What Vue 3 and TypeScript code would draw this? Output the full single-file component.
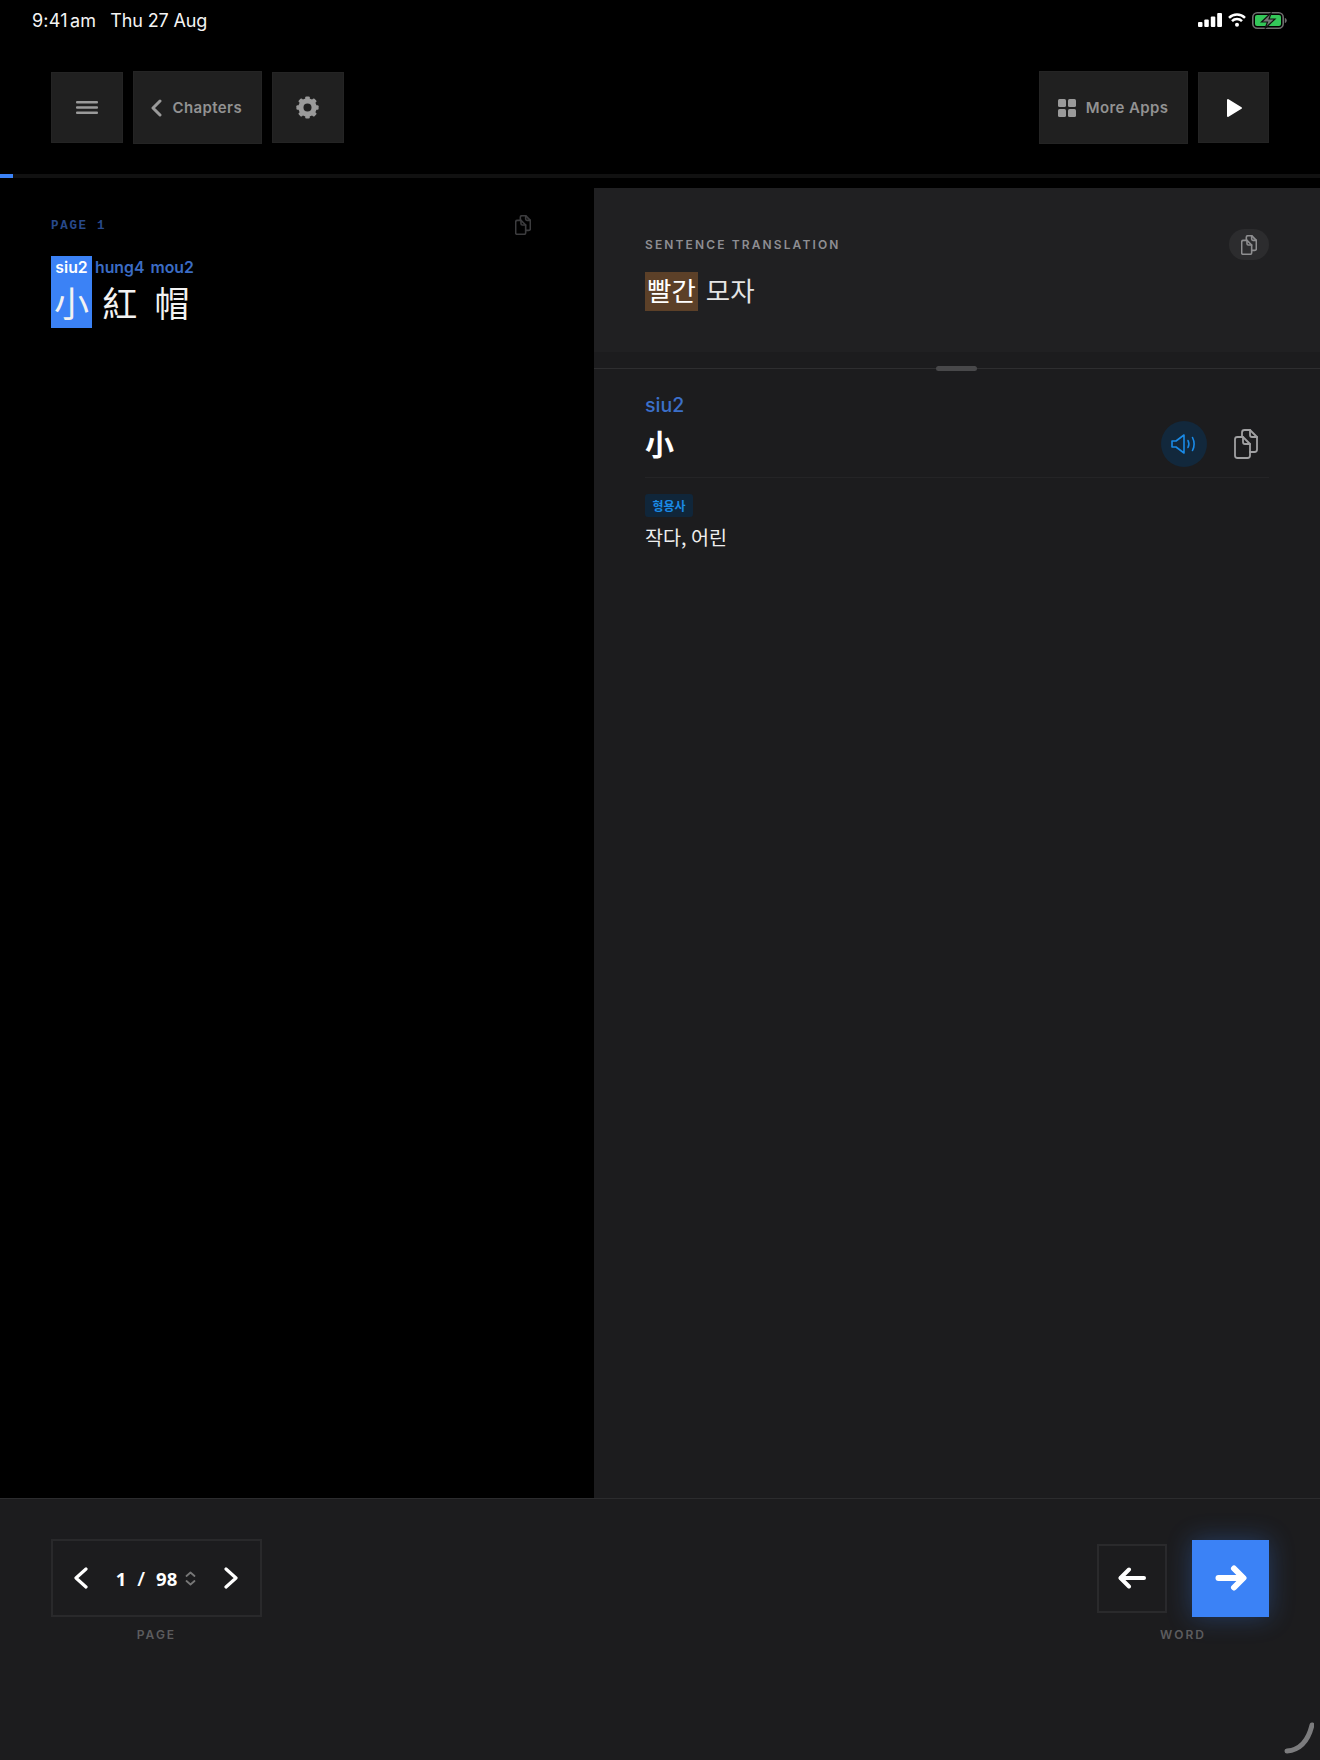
<script setup lang="ts">
interface RubyWord {
  reading: string
  text: string
  active?: boolean
}

const words: RubyWord[] = [
  { reading: 'siu2', text: '小', active: true },
  { reading: 'hung4', text: '紅' },
  { reading: 'mou2', text: '帽' },
]

const copyPaths = [
  'M8 7V3.5A2.5 2.5 0 0 1 10.5 1H16l7 7v12.5a2.5 2.5 0 0 1-2.500 2.500H16',
  'M16 1v5a2 2 0 0 0 2 2h5',
  'M3.500 8H9l7 7v11.500a2.500 2.500 0 0 1-2.500 2.500h-10A2.500 2.500 0 0 1 1 26.500v-16A2.500 2.500 0 0 1 3.500 8z',
  'M9 8v5a2 2 0 0 0 2 2h5',
]

const gearTeeth = [0, 45, 90, 135, 180, 225, 270, 315]
</script>

<template>
  <div class="app">
    <header class="status">
      <div class="status__time">
        <span class="status__clock">9:41 am</span>
        <span class="status__date">Thu 27 Aug</span>
      </div>
      <div class="status__icons">
        <svg width="24" height="14" viewBox="0 0 24 14" fill="#fff">
          <rect x="0" y="9" width="4.500" height="5" rx="1" />
          <rect x="6.300" y="6.500" width="4.500" height="7.500" rx="1" />
          <rect x="12.800" y="3.500" width="4.500" height="10.500" rx="1" />
          <rect x="19.200" y="0" width="4.800" height="14" rx="1" />
        </svg>
        <svg width="18" height="14" viewBox="0 0 18 14" fill="none" stroke="#fff" stroke-width="2.500">
          <path d="M1 4.800a11.500 11.500 0 0 1 16 0" />
          <path d="M4 8.200a7 7 0 0 1 10 0" />
          <circle cx="9" cy="11.800" r="2" fill="#fff" stroke="none" />
        </svg>
        <svg width="35" height="17" viewBox="0 0 35 17">
          <rect x="0.800" y="0.800" width="30.400" height="15.400" rx="4.500" fill="none" stroke="#6e6e6e" stroke-width="1.600" />
          <rect x="3" y="3" width="26" height="11" rx="2" fill="#34c759" />
          <path d="M32.800 6v5c1.200-.3 2-1.300 2-2.500s-.8-2.200-2-2.500z" fill="#6e6e6e" />
          <path d="M19.500 0.500 9.500 10h6l-2.500 6.500L23 7h-6z" fill="#777" stroke="#111" stroke-width="1.200" />
        </svg>
      </div>
    </header>

    <nav class="toolbar">
      <div class="toolbar__group">
        <button class="tool tool--square">
          <svg width="22" height="13" viewBox="0 0 22 13" fill="#9a9a9a">
            <rect width="22" height="2.600" rx="1" />
            <rect y="5.200" width="22" height="2.600" rx="1" />
            <rect y="10.400" width="22" height="2.600" rx="1" />
          </svg>
        </button>
        <button class="tool tool--text tool--chapters">
          <svg width="11" height="18" viewBox="0 0 11 18" fill="none" stroke="#9a9a9a" stroke-width="3" stroke-linecap="round" stroke-linejoin="round">
            <path d="M9 2 2 9l7 7" />
          </svg>
          <span>Chapters</span>
        </button>
        <button class="tool tool--square">
          <svg width="23" height="23" viewBox="0 0 24 24" fill="#9a9a9a">
            <rect
              v-for="deg in gearTeeth"
              :key="deg"
              x="9.600"
              y="0.400"
              width="4.800"
              height="5"
              rx="1.200"
              :transform="`rotate(${deg} 12 12)`"
            />
            <circle cx="12" cy="12" r="6.900" fill="none" stroke="#9a9a9a" stroke-width="5.400" />
          </svg>
        </button>
      </div>
      <div class="toolbar__group">
        <button class="tool tool--text tool--apps">
          <svg width="18" height="18" viewBox="0 0 18 18" fill="#9a9a9a">
            <rect width="8" height="8" rx="1.500" />
            <rect x="10" width="8" height="8" rx="1.500" />
            <rect y="10" width="8" height="8" rx="1.500" />
            <rect x="10" y="10" width="8" height="8" rx="1.500" />
          </svg>
          <span>More Apps</span>
        </button>
        <button class="tool tool--square">
          <svg class="tool__play" width="17" height="20" viewBox="0 0 17 20" fill="#fff" stroke="#fff" stroke-width="2" stroke-linejoin="round">
            <path d="M2 2v16l13-8z" />
          </svg>
        </button>
      </div>
    </nav>

    <div class="progress"><div class="progress__fill"></div></div>

    <main class="main">
      <section class="reader">
        <div class="reader__head">
          <span class="reader__page">PAGE 1</span>
          <svg class="copy copy--dim" width="16" height="20" viewBox="0 0 24 30" fill="none">
            <path v-for="d in copyPaths" :key="d" :d="d" />
          </svg>
        </div>
        <div class="reader__line">
          <div v-for="w in words" :key="w.reading" class="word" :class="{ 'word--active': w.active }">
            <span class="word__reading">{{ w.reading }}</span>
            <span class="word__text">{{ w.text }}</span>
          </div>
        </div>
      </section>

      <section class="panel">
        <div class="sentence">
          <div class="sentence__head">
            <span class="sentence__label">SENTENCE TRANSLATION</span>
            <span class="sentence__copy">
              <svg class="copy copy--mid" width="16" height="20" viewBox="0 0 24 30" fill="none">
                <path v-for="d in copyPaths" :key="d" :d="d" />
              </svg>
            </span>
          </div>
          <div class="sentence__text">
            <mark class="sentence__mark">빨간</mark>
            <span>모자</span>
          </div>
        </div>
        <div class="split"><span class="split__handle"></span></div>
        <div class="entry">
          <div class="entry__reading">siu2</div>
          <div class="entry__head">
            <span class="entry__word">小</span>
            <div class="entry__actions">
              <span class="entry__sound">
                <svg width="26" height="20" viewBox="0 0 26 20" fill="none" stroke="#1a8ae6" stroke-width="1.600" stroke-linecap="round" stroke-linejoin="round">
                  <path d="M1 7v6h4l8 6V1L5 7z" />
                  <path d="M17 6.500c1 2 1 5 0 7" />
                  <path d="M21.500 3.500c2 4 2 9 0 13" />
                </svg>
              </span>
              <svg class="copy copy--bright" width="24" height="30" viewBox="0 0 24 30" fill="none">
                <path v-for="d in copyPaths" :key="d" :d="d" />
              </svg>
            </div>
          </div>
          <span class="entry__tag">형용사</span>
          <p class="entry__meaning">작다, 어린</p>
        </div>
      </section>
    </main>

    <footer class="footer">
      <div class="pager">
        <div class="pager__box">
          <svg width="15" height="22" viewBox="0 0 15 22" fill="none" stroke="#fff" stroke-width="3.200" stroke-linecap="round" stroke-linejoin="round">
            <path d="M13 2 3 11l10 9" />
          </svg>
          <div class="pager__count">
            <span>1</span>
            <span class="pager__slash">/</span>
            <span>98</span>
            <svg width="11" height="15" viewBox="0 0 11 15" fill="none" stroke="#777" stroke-width="1.800" stroke-linecap="round" stroke-linejoin="round">
              <path d="M1.500 5 5.500 1.500l4 3.500" />
              <path d="M1.500 10l4 3.500 4-3.500" />
            </svg>
          </div>
          <svg width="15" height="22" viewBox="0 0 15 22" fill="none" stroke="#fff" stroke-width="3.200" stroke-linecap="round" stroke-linejoin="round">
            <path d="M2 2l10 9-10 9" />
          </svg>
        </div>
        <span class="footer__label">PAGE</span>
      </div>

      <div class="stepper">
        <div class="stepper__row">
          <button class="step step--back">
            <svg width="28" height="22" viewBox="0 0 28 22" fill="none" stroke="#fff" stroke-width="4" stroke-linecap="round" stroke-linejoin="round">
              <path d="M26 11H3" />
              <path d="M11 2.500 2.500 11l8.500 8.500" />
            </svg>
          </button>
          <button class="step step--next">
            <svg width="32" height="26" viewBox="0 0 32 26" fill="none" stroke="#fff" stroke-width="6" stroke-linecap="round" stroke-linejoin="round">
              <path d="M3.500 13H27" />
              <path d="M19 3.500 28.500 13 19 22.500" />
            </svg>
          </button>
        </div>
        <span class="footer__label">WORD</span>
      </div>
    </footer>

    <svg class="corner" width="36" height="34" viewBox="0 0 36 34" fill="none" stroke="#7c7c7e" stroke-width="5" stroke-linecap="round">
      <path d="M9 30c12-1 21-9 25-26" />
    </svg>
  </div>
</template>

<style scoped>
.app {
  position: relative;
  width: 1320px;
  height: 1760px;
  display: flex;
  flex-direction: column;
  overflow: hidden;
  background: #000;
  color: #fff;
  font-family: Inter, "Noto Sans CJK KR", sans-serif;
}

.status {
  height: 40px;
  padding: 0 33px 0 32px;
  display: flex;
  align-items: center;
  justify-content: space-between;
  flex-shrink: 0;
}

.status__time {
  display: flex;
  gap: 14px;
  font-size: 18px;
  color: #f4f4f4;
}

.status__clock {
  letter-spacing: 0.2px;
  word-spacing: -3px;
}

.status__date {
  letter-spacing: -0.15px;
}

.status__icons {
  display: flex;
  align-items: center;
  gap: 6px;
}

.toolbar {
  margin-top: 31px;
  padding: 0 51px;
  height: 73px;
  display: flex;
  align-items: center;
  justify-content: space-between;
  flex-shrink: 0;
}

.toolbar__group {
  display: flex;
  align-items: center;
  gap: 10px;
}

.tool {
  padding: 0;
  display: flex;
  align-items: center;
  justify-content: center;
  background: #202020;
  border: 1px solid #242424;
  color: #929292;
  font-family: Inter, sans-serif;
  font-size: 15px;
  font-weight: 600;
  letter-spacing: 0.4px;
}

.tool--square {
  width: 71.500px;
  height: 71px;
}

.tool--text {
  height: 73px;
  gap: 10px;
}

.tool--chapters {
  width: 129.500px;
}

.tool--chapters svg {
  margin-left: -1px;
}

.tool--apps {
  width: 149px;
}

.tool__play {
  margin-left: 3px;
}

.progress {
  margin-top: 30px;
  height: 4px;
  background: #111;
  flex-shrink: 0;
}

.progress__fill {
  width: 13px;
  height: 100%;
  background: #3b82f6;
}

.main {
  margin-top: 10px;
  flex: 1;
  min-height: 0;
  display: flex;
}

.reader {
  width: 594px;
  padding: 27px 63px 0 51px;
  box-sizing: border-box;
  flex-shrink: 0;
}

.reader__head {
  height: 20px;
  display: flex;
  align-items: center;
  justify-content: space-between;
}

.reader__page {
  font-family: "Liberation Mono", monospace;
  font-size: 12.500px;
  font-weight: 700;
  letter-spacing: 1.700px;
  color: #28498a;
  transform: translateY(0.5px);
}

.reader__line {
  margin-top: 21px;
  display: flex;
}

.word {
  height: 72px;
  padding: 0 3px;
  display: flex;
  flex-direction: column;
  align-items: center;
}

.word--active {
  background: #3b82f6;
}

.word__reading {
  height: 24px;
  line-height: 24px;
  font-size: 15.800px;
  font-weight: 600;
  color: #3b6cc4;
}

.word--active .word__reading {
  color: #fff;
}

.word__text {
  height: 48px;
  line-height: 44px;
  font-family: "Noto Sans CJK TC", sans-serif;
  font-size: 35px;
  font-weight: 400;
  color: #f2f2f2;
}

.copy path {
  stroke-width: 1.800px;
  stroke-linejoin: round;
  stroke-linecap: round;
}

.copy--dim path {
  stroke: #3c3c3e;
  stroke-width: 2.400px;
}

.copy--mid path {
  stroke: #8e8e90;
  stroke-width: 2.400px;
}

.copy--bright path {
  stroke: #a0a0a2;
}

.panel {
  flex: 1;
  display: flex;
  flex-direction: column;
  background: #1c1c1e;
}

.sentence {
  height: 164px;
  padding: 41px 51px 0;
  box-sizing: border-box;
  background: #202022;
}

.sentence__head {
  height: 31px;
  display: flex;
  align-items: center;
  justify-content: space-between;
}

.sentence__label {
  font-size: 12px;
  font-weight: 600;
  letter-spacing: 2.120px;
  color: #8e8e93;
}

.sentence__copy {
  width: 40px;
  height: 31px;
  display: flex;
  align-items: center;
  justify-content: center;
  border-radius: 16px;
  background: #2c2c2e;
}

.sentence__text {
  margin-top: 12px;
  display: flex;
  gap: 8px;
  font-family: "Noto Sans CJK KR", sans-serif;
  font-size: 26.500px;
  line-height: 36px;
  color: #e4e4e4;
}

.sentence__text span {
  line-height: 36px;
}

.sentence__mark {
  display: block;
  height: 39px;
  padding: 0 2px;
  background: #5c4028;
  color: #fff;
}

.split {
  position: relative;
  height: 16px;
  border-bottom: 1px solid #2e2e30;
  flex-shrink: 0;
}

.split__handle {
  position: absolute;
  left: 342px;
  bottom: -3px;
  width: 41px;
  height: 5px;
  border-radius: 3px;
  background: #48484a;
}

.entry {
  padding: 25px 51px 0;
}

.entry__reading {
  height: 24px;
  line-height: 22px;
  font-size: 19.500px;
  font-weight: 500;
  color: #3b6fc9;
}

.entry__head {
  margin-top: 2px;
  height: 47px;
  padding-bottom: 10px;
  border-bottom: 1px solid #242426;
  display: flex;
  align-items: center;
  justify-content: space-between;
}

.entry__word {
  font-family: "Noto Sans CJK TC", sans-serif;
  font-size: 29px;
  line-height: 44px;
  font-weight: 700;
  transform: translateY(-1px);
}

.entry__actions {
  display: flex;
  align-items: center;
  gap: 27px;
  padding-right: 11px;
}

.entry__sound {
  width: 46px;
  height: 46px;
  display: flex;
  align-items: center;
  justify-content: center;
  border-radius: 50%;
  background: #12283c;
}

.entry__tag {
  display: block;
  width: 48px;
  height: 23px;
  margin-top: 16px;
  line-height: 23px;
  text-align: center;
  border-radius: 3px;
  background: #10263a;
  color: #1a8ae6;
  font-family: "Noto Sans CJK KR", sans-serif;
  font-size: 12px;
  font-weight: 700;
}

.entry__meaning {
  margin: 5px 0 0;
  line-height: 30px;
  font-family: "Noto Sans CJK KR", sans-serif;
  font-size: 19.600px;
  color: #eee;
}

.footer {
  height: 262px;
  padding: 40px 51px 0;
  box-sizing: border-box;
  display: flex;
  align-items: flex-start;
  justify-content: space-between;
  border-top: 1px solid #2c2c2e;
  background: #1c1c1e;
  flex-shrink: 0;
}

.pager,
.stepper {
  display: flex;
  flex-direction: column;
  align-items: center;
}

.pager__box {
  width: 211px;
  height: 78px;
  padding: 0 21px 0 20px;
  box-sizing: border-box;
  display: flex;
  align-items: center;
  justify-content: space-between;
  border: 2px solid #29292b;
}

.pager__count {
  display: flex;
  align-items: center;
  gap: 11px;
  font-family: "Open Sans", sans-serif;
  font-size: 18.500px;
  font-weight: 700;
}

.pager__slash {
  font-size: 20px;
  font-weight: 600;
}

.pager__count svg {
  margin-left: -3px;
}

.footer__label {
  margin-top: 9px;
  line-height: 18px;
  font-size: 12px;
  font-weight: 600;
  letter-spacing: 2px;
  color: #5c5c5e;
}

.stepper__row {
  height: 78px;
  display: flex;
  align-items: center;
  gap: 25px;
}

.step {
  padding: 0;
  display: flex;
  align-items: center;
  justify-content: center;
}

.step--back {
  width: 70px;
  height: 69px;
  background: transparent;
  border: 2px solid #2a2a2c;
}

.step--next {
  width: 77px;
  height: 77px;
  background: #3b82f6;
  border: 0;
  box-shadow: 0 0 26px rgba(59, 130, 246, 0.32);
}

.corner {
  position: absolute;
  right: 6px;
  bottom: 5px;
}
</style>
